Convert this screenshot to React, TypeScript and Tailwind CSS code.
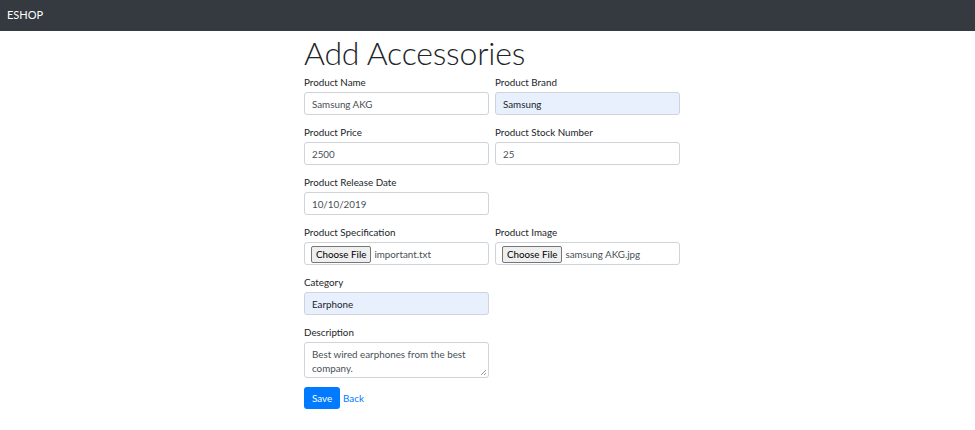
import React from 'react';

const font = { fontFamily: 'Lato, "Open Sans", sans-serif' };

function Field({ label, children }: { label: string; children: React.ReactNode }) {
  return (
    <div className="mb-[9px]">
      <div className="h-[15px] leading-[16px] mb-[3px] text-[9.8px] text-[#212529]">{label}</div>
      {children}
    </div>
  );
}

function TextInput({ value, filled }: { value: string; filled?: boolean }) {
  return (
    <div
      className={
        'h-[23px] flex items-center px-[7px] pt-[2px] text-[9.8px] rounded-[3px] border ' +
        (filled ? 'bg-[#e8f0fe] border-[#ced4da] text-[#212529]' : 'bg-white border-[#ced4da] text-[#495057]')
      }
    >
      {value}
    </div>
  );
}

function FileInput({ name }: { name: string }) {
  return (
    <div className="h-[23px] flex items-center pl-[6px] pt-[1px] text-[9.8px] rounded-[3px] border border-[#ced4da] bg-white">
      <span className="h-[17px] px-[4px] pt-[1px] flex items-center bg-[#efefef] border border-[#767676] rounded-[2px] text-[#000]">
        Choose File
      </span>
      <span className="ml-[3px] pt-[1px] text-[#495057]">{name}</span>
    </div>
  );
}

export default function App() {
  return (
    <div className="min-h-[430px] bg-white" style={font}>
      <nav className="h-[31px] bg-[#343a40] flex items-center px-[7px]">
        <span className="text-white text-[11px]">ESHOP</span>
      </nav>
      <div className="w-[376px] ml-[304px]">
        <h1 className="h-[43px] leading-[43px] text-[32px] font-light tracking-[-0.2px] text-[#212529]">Add Accessories</h1>
        <div className="grid grid-cols-2 gap-x-[6px]">
          <Field label="Product Name">
            <TextInput value="Samsung AKG" />
          </Field>
          <Field label="Product Brand">
            <TextInput value="Samsung" filled />
          </Field>
          <Field label="Product Price">
            <TextInput value="2500" />
          </Field>
          <Field label="Product Stock Number">
            <TextInput value="25" />
          </Field>
          <Field label="Product Release Date">
            <TextInput value="10/10/2019" />
          </Field>
          <div />
          <Field label="Product Specification">
            <FileInput name="important.txt" />
          </Field>
          <Field label="Product Image">
            <FileInput name="samsung AKG.jpg" />
          </Field>
          <Field label="Category">
            <TextInput value="Earphone" filled />
          </Field>
          <div />
          <Field label="Description">
            <div className="relative h-[36px] px-[7px] py-[4px] text-[9.8px] leading-[14px] rounded-[3px] border border-[#ced4da] text-[#495057] bg-white">
              Best wired earphones from the best company.
              <svg className="absolute right-[1px] bottom-[1px]" width="7" height="7" viewBox="0 0 7 7">
                <path d="M6 1L1 6M6 4L4 6" stroke="#999" strokeWidth="1" />
              </svg>
            </div>
          </Field>
        </div>
        <div className="flex items-center">
          <button className="h-[22px] px-[8px] pt-[1px] rounded-[3px] bg-[#007bff] text-white text-[9.8px]">Save</button>
          <a className="ml-[3px] text-[9.8px] text-[#007bff]" href="#">Back</a>
        </div>
      </div>
    </div>
  );
}
